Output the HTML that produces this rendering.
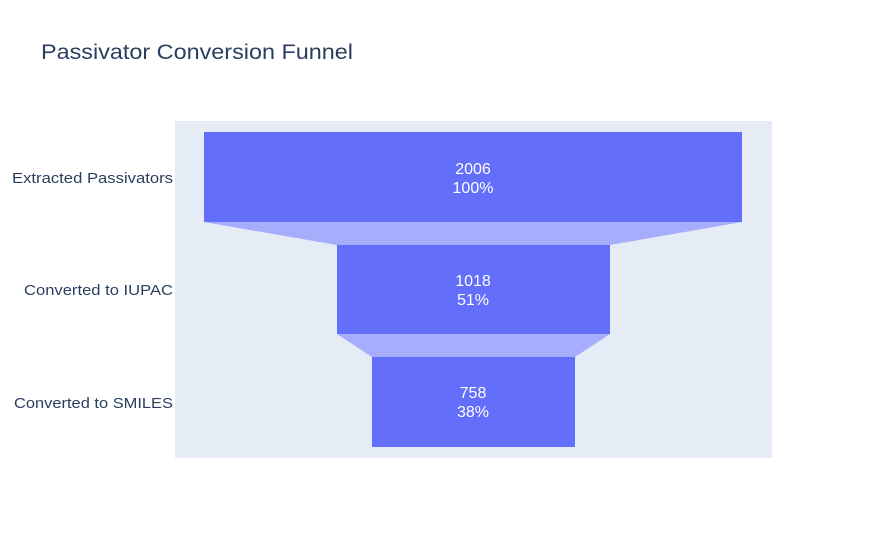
<!DOCTYPE html>
<html><head><meta charset="utf-8"><style>
body{margin:0;width:871px;height:554px;background:#fff;overflow:hidden;font-family:"Liberation Sans",sans-serif}
</style></head><body>
<svg width="871" height="554" xmlns="http://www.w3.org/2000/svg" font-family="Liberation Sans, sans-serif">
<text x="41" y="59" font-size="21" fill="#2a3f5f" textLength="312" lengthAdjust="spacingAndGlyphs">Passivator Conversion Funnel</text>
<rect x="175" y="121" width="597" height="337" fill="#e5ecf6"/>
<polygon points="204,222 742,222 610,245 337,245" fill="#a5adfc"/>
<polygon points="337,334 610,334 575,357 372,357" fill="#a5adfc"/>
<rect x="204" y="132" width="538" height="90" fill="#636efa"/>
<rect x="337" y="245" width="273" height="89" fill="#636efa"/>
<rect x="372" y="357" width="203" height="90" fill="#636efa"/>
<g fill="#fff" font-size="16" text-anchor="middle">
<text x="473" y="174">2006</text><text x="473" y="193">100%</text>
<text x="473" y="286">1018</text><text x="473" y="305">51%</text>
<text x="473" y="398">758</text><text x="473" y="417">38%</text>
</g>
<g fill="#2a3f5f" font-size="15">
<text x="12" y="183" textLength="161" lengthAdjust="spacingAndGlyphs">Extracted Passivators</text>
<text x="24" y="295" textLength="149" lengthAdjust="spacingAndGlyphs">Converted to IUPAC</text>
<text x="14" y="408" textLength="159" lengthAdjust="spacingAndGlyphs">Converted to SMILES</text>
</g>
</svg>
</body></html>
